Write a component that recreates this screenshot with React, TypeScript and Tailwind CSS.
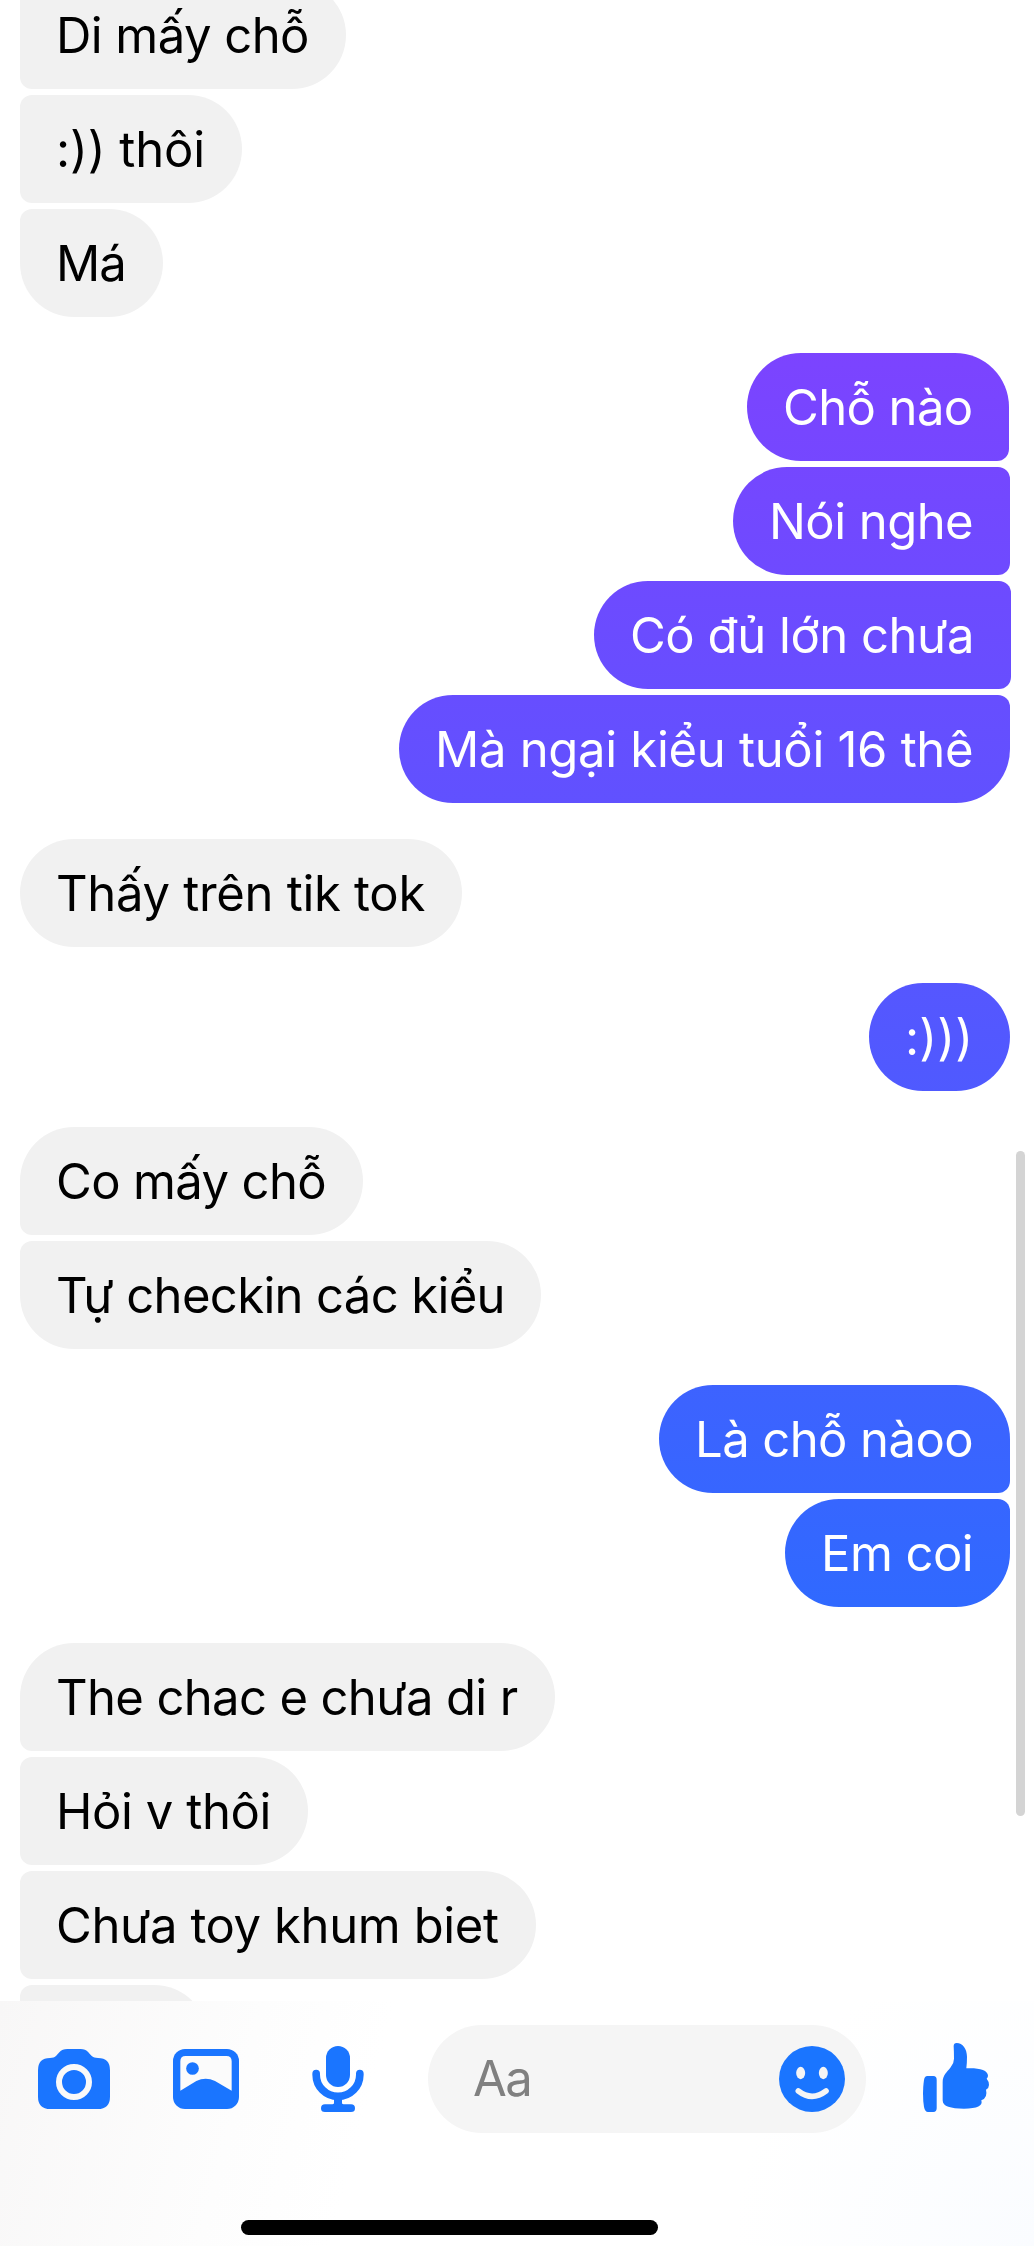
import React from 'react';
import clsx from 'clsx';

type Message = {
  text: string;
  size: string;
};

type Group = {
  from: 'them' | 'me';
  // the group continues above the visible part of the thread
  cutTop?: boolean;
  messages: Message[];
};

const groups: Group[] = [
  {
    from: 'them',
    cutTop: true,
    messages: [
      { text: 'Di mấy chỗ', size: 'w-[326px] tracking-[-0.55px]' },
      { text: ':)) thôi', size: 'w-[222px] tracking-[-0.1px]' },
      { text: 'Má', size: 'w-[143px] tracking-[-1px]' },
    ],
  },
  {
    from: 'me',
    messages: [
      { text: 'Chỗ nào', size: 'w-[262px] mr-px tracking-[-0.6px]' },
      { text: 'Nói nghe', size: 'w-[277px] tracking-[-0.55px]' },
      { text: 'Có đủ lớn chưa', size: 'w-[417px] -mr-px tracking-[-0.45px]' },
      { text: 'Mà ngại kiểu tuổi 16 thê', size: 'w-[611px] tracking-[-0.3px]' },
    ],
  },
  {
    from: 'them',
    messages: [{ text: 'Thấy trên tik tok', size: 'w-[442px] tracking-[-0.3px]' }],
  },
  {
    from: 'me',
    messages: [{ text: ':)))', size: 'w-[141px] tracking-[0.1px]' }],
  },
  {
    from: 'them',
    messages: [
      { text: 'Co mấy chỗ', size: 'w-[343px] tracking-[-0.63px]' },
      { text: 'Tự checkin các kiểu', size: 'w-[521px] tracking-[-0.65px]' },
    ],
  },
  {
    from: 'me',
    messages: [
      { text: 'Là chỗ nàoo', size: 'w-[351px] tracking-[-0.58px]' },
      { text: 'Em coi', size: 'w-[225px] tracking-[-0.55px]' },
    ],
  },
  {
    from: 'them',
    messages: [
      { text: 'The chac e chưa di r', size: 'w-[535px] tracking-[-0.64px]' },
      { text: 'Hỏi v thôi', size: 'w-[288px] tracking-[-0.4px]' },
      { text: 'Chưa toy khum biet', size: 'w-[516px] tracking-[-0.4px]' },
      { text: '', size: 'w-[188px]' },
    ],
  },
];

function Bubble({ message, mine, first, last }: { message: Message; mine: boolean; first: boolean; last: boolean }) {
  return (
    <div
      className={clsx(
        'h-[108px] shrink-0 pl-9 text-[49px] leading-[110px] whitespace-nowrap',
        message.size,
        mine
          ? 'rounded-l-[54px] bg-[linear-gradient(#9139ff_0px,#1875ff_2001px)] bg-fixed text-white'
          : 'rounded-r-[54px] bg-[#f1f1f1] text-black',
        mine && (first ? 'rounded-tr-[54px]' : 'rounded-tr-[12px]'),
        mine && (last ? 'rounded-br-[54px]' : 'rounded-br-[12px]'),
        !mine && (first ? 'rounded-tl-[54px]' : 'rounded-tl-[12px]'),
        !mine && (last ? 'rounded-bl-[54px]' : 'rounded-bl-[12px]'),
      )}
    >
      {message.text}
    </div>
  );
}

function CameraIcon() {
  return (
    <svg className="h-[60px] w-[72px] shrink-0" viewBox="24 39 216 180">
      <path
        fill="#1a75ff"
        d="M24 103Q24 66 60 66C78 66 78 59 88 49Q97 39 112 39H152Q166 39 175 49C184 59 187 66 204 66Q240 66 240 103V182Q240 219 203 219H61Q24 219 24 182Z"
      />
      <circle cx="132" cy="138" r="45" fill="none" stroke="#f9f9f9" strokeWidth="18" />
    </svg>
  );
}

function PhotoIcon() {
  return (
    <svg className="ml-[63px] h-[60px] w-[66px] shrink-0" viewBox="519 207 198 180">
      <rect x="519" y="207" width="198" height="180" rx="36" fill="#1a75ff" />
      <path fill="#fbfbfb" d="M541 332V244Q541 228 557 228H679Q695 228 695 244V332L645 303Q617 290 589 303Z" />
      <circle cx="577.5" cy="265.5" r="19" fill="#1a75ff" />
    </svg>
  );
}

function MicIcon() {
  return (
    <svg className="ml-[73px] h-[66px] w-[52px] shrink-0" viewBox="936 198 156 198">
      <rect x="978" y="198" width="72" height="123" rx="36" fill="#1a75ff" />
      <path d="M948.500 281V284A65.500 65 0 0 0 1079.500 284V281" fill="none" stroke="#1a75ff" strokeWidth="23" strokeLinecap="round" />
      <path
        fill="#1a75ff"
        d="M1002 350H1026V369Q1026 373 1031 373H1053Q1065 373 1065 384.500Q1065 396 1053 396H975Q963 396 963 384.500Q963 373 975 373H997Q1002 373 1002 369Z"
      />
    </svg>
  );
}

function SmileIcon() {
  return (
    <svg className="h-[66px] w-[66px] shrink-0" viewBox="57 78 198 198">
      <circle cx="156" cy="177" r="99" fill="#1a75ff" />
      <ellipse cx="122" cy="159" rx="13.500" ry="18.500" fill="#f5f5f5" />
      <ellipse cx="190" cy="159" rx="13.500" ry="18.500" fill="#f5f5f5" />
      <path d="M115 213Q156 245 198 213" fill="none" stroke="#f5f5f5" strokeWidth="17" strokeLinecap="round" />
    </svg>
  );
}

function ThumbIcon() {
  return (
    <svg className="mb-[3px] ml-[57px] h-[69px] w-[66px] shrink-0" viewBox="39 21 198 207">
      <path
        fill="#1a75ff"
        d="M52 120H70Q80 120 80 131V217Q80 228 70 228H54Q45 228 42 213Q39 195 39 172Q39 150 42 132Q44 120 52 120Z"
      />
      <path
        fill="#1a75ff"
        d="M131 30Q131 21 140 21C158 21 171 39 171 62Q171 80 169 97C205 95 234 102 234 119Q234 123 230 128Q237 136 237 147Q237 156 228 161Q234 185 214 193Q222 218 162 218C122 218 98 212 98 193V139C98 118 110 110 122 94Q132 82 132 68Q132 50 131 30Z"
      />
    </svg>
  );
}

export default function App() {
  return (
    <div className="relative flex h-[2246px] w-[1034px] flex-col overflow-hidden bg-white font-['Inter','Noto_Sans',sans-serif]">
      <main className="flex h-[2001px] shrink-0 flex-col gap-9 overflow-hidden pr-6 pl-5">
        {groups.map((group, g) => (
          <div
            key={g}
            className={clsx(
              'flex shrink-0 flex-col gap-1.5',
              group.from === 'me' ? 'items-end' : 'items-start',
              group.cutTop && '-mt-[19px]',
            )}
          >
            {group.messages.map((message, i) => (
              <Bubble
                key={i}
                message={message}
                mine={group.from === 'me'}
                first={i === 0 && !group.cutTop}
                last={i === group.messages.length - 1 && message.text !== ''}
              />
            ))}
          </div>
        ))}
      </main>

      {/* scroll indicator */}
      <div className="absolute top-[1151px] right-[9px] h-[665px] w-[9px] rounded-full bg-[#d4d4d4]" />

      <footer className="flex h-[245px] shrink-0 flex-col items-center bg-[radial-gradient(circle_at_100%_100%,#fafcff_0px,#ffffff00_300px),linear-gradient(105deg,#f8f7f7_0%,#fdfdfd_24%,#ffffff_36%)] pt-6">
        <div className="flex h-[108px] w-full items-center pl-[38px]">
          <CameraIcon />
          <PhotoIcon />
          <MicIcon />
          <div className="ml-16 flex h-[108px] w-[438px] shrink-0 items-center justify-between rounded-full bg-[#f5f5f5] pr-[21px] pl-[45px]">
            <span className="text-[49px] leading-[108px] tracking-[-1.5px] text-[#808080]">Aa</span>
            <SmileIcon />
          </div>
          <ThumbIcon />
        </div>
        <div className="mt-[87px] mr-[135px] h-[15px] w-[417px] rounded-full bg-black" />
      </footer>
    </div>
  );
}
